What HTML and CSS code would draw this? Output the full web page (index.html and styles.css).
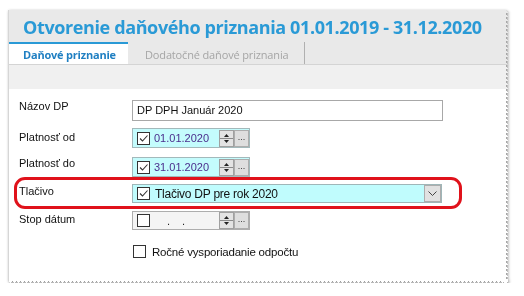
FILE: index.html
```html
<!DOCTYPE html>
<html lang="sk">
<head>
<meta charset="utf-8">
<title>Otvorenie daňového priznania</title>
<link rel="stylesheet" href="styles.css">
</head>
<body>
<div class="frame">
  <div class="panel">
    <div class="title">Otvorenie daňového priznania 01.01.2019 - 31.12.2020</div>
    <div class="tabs">
      <div class="tab active">Daňové priznanie</div>
      <div class="tab">Dodatočné daňové priznania</div>
    </div>
    <div class="strip"></div>
    <div class="content">
      <div class="row r1">
        <div class="label">Názov DP</div>
        <div class="input">DP DPH Január 2020</div>
      </div>
      <div class="row r2">
        <div class="label">Platnosť od</div>
        <div class="date">
          <span class="cb checked"><svg viewBox="0 0 11 11" width="11" height="11"><path d="M2 5.5 L4.5 8 L9.5 2.5" fill="none" stroke="#333" stroke-width="1.1"/></svg></span>
          <span class="dtext">01.01.2020</span>
          <span class="spin"><svg viewBox="0 0 13 15" width="13" height="15"><path d="M4 6 L6.5 3 L9 6 Z" fill="#222"/><line x1="0" y1="7.5" x2="13" y2="7.5" stroke="#8a8a8a"/><path d="M4 9 L6.5 12 L9 9 Z" fill="#222"/></svg></span>
          <span class="dots">...</span>
        </div>
      </div>
      <div class="row r3">
        <div class="label">Platnosť do</div>
        <div class="date">
          <span class="cb checked"><svg viewBox="0 0 11 11" width="11" height="11"><path d="M2 5.5 L4.5 8 L9.5 2.5" fill="none" stroke="#333" stroke-width="1.1"/></svg></span>
          <span class="dtext">31.01.2020</span>
          <span class="spin"><svg viewBox="0 0 13 15" width="13" height="15"><path d="M4 6 L6.5 3 L9 6 Z" fill="#222"/><line x1="0" y1="7.5" x2="13" y2="7.5" stroke="#8a8a8a"/><path d="M4 9 L6.5 12 L9 9 Z" fill="#222"/></svg></span>
          <span class="dots">...</span>
        </div>
      </div>
      <div class="row r4 highlight">
        <div class="label">Tlačivo</div>
        <div class="combo">
          <span class="cb checked"><svg viewBox="0 0 11 11" width="11" height="11"><path d="M2 5.5 L4.5 8 L9.5 2.5" fill="none" stroke="#333" stroke-width="1.1"/></svg></span>
          <span class="ctext">Tlačivo DP pre rok 2020</span>
          <span class="drop"><svg viewBox="0 0 9 5" width="9" height="5"><path d="M0.5 0.5 L4.5 4.5 L8.5 0.5" fill="none" stroke="#444" stroke-width="1"/></svg></span>
        </div>
      </div>
      <div class="row r5">
        <div class="label">Stop dátum</div>
        <div class="date empty">
          <span class="cb"></span>
          <span class="dtext blank"><span>.</span><span>.</span></span>
          <span class="spin"><svg viewBox="0 0 13 15" width="13" height="15"><path d="M4 6 L6.5 3 L9 6 Z" fill="#222"/><line x1="0" y1="7.5" x2="13" y2="7.5" stroke="#8a8a8a"/><path d="M4 9 L6.5 12 L9 9 Z" fill="#222"/></svg></span>
          <span class="dots">...</span>
        </div>
      </div>
      <div class="row r6">
        <div class="label"></div>
        <div class="check">
          <span class="cb big"></span>
          <span class="ctext2">Ročné vysporiadanie odpočtu</span>
        </div>
      </div>
    </div>
  </div>
</div>
</body>
</html>
```

FILE: styles.css
```css
*, *::before, *::after { box-sizing: border-box; }
html, body { margin: 0; padding: 0; background: #fff; }
body { font-family: "Liberation Sans", Arial, sans-serif; color: #111; }

.frame {
  margin: 10px 0 0 8px;
  width: 500px;
  height: 273px;
  filter: drop-shadow(1px 1px 1.5px rgba(0,0,0,.45));
}
.panel {
  width: 100%;
  height: 100%;
  background: #fff;
  display: flex;
  flex-direction: column;
  border-left: 1px solid #d6d6d6;
  -webkit-mask:
    linear-gradient(#000,#000) top left / calc(100% - 4px) calc(100% - 4px) no-repeat,
    conic-gradient(from -135deg at right, #000 90deg, transparent 0) right top / 4px 4px repeat-y,
    conic-gradient(from -45deg at bottom, #000 90deg, transparent 0) left bottom / 4px 4px repeat-x;
  mask:
    linear-gradient(#000,#000) top left / calc(100% - 4px) calc(100% - 4px) no-repeat,
    conic-gradient(from -135deg at right, #000 90deg, transparent 0) right top / 4px 4px repeat-y,
    conic-gradient(from -45deg at bottom, #000 90deg, transparent 0) left bottom / 4px 4px repeat-x;
}

.title {
  height: 32px;
  background: #e9e9e9;
  padding: 4px 0 0 14px;
  font-family: "Open Sans", "Noto Sans", sans-serif;
  font-weight: 700;
  font-size: 18px;
  line-height: 26px;
  color: #2a9ad6;
  letter-spacing: -0.38px;
  white-space: nowrap;
}
.tabs {
  height: 23px;
  background: #e9e9e9;
  display: flex;
  font-family: "Open Sans", "Noto Sans", sans-serif;
  font-size: 11px;
  border-bottom: 1px solid #d4d4d4;
}
.tab {
  height: 22px;
  line-height: 21px;
  white-space: nowrap;
}
.tab.active {
  width: 119px;
  background: #fff;
  border-top: 2px solid #2a9ad6;
  color: #1f7fc2;
  font-weight: 700;
  padding-left: 14px;
  letter-spacing: -0.2px;
}
.tab:not(.active) {
  width: 177px;
  color: #a5a5a5;
  padding: 2px 0 0 17px;
  border-right: 1px solid #b0b0b0;
  letter-spacing: -0.15px;
}
.strip {
  height: 24px;
  background: #f0f0f0;
}

.content {
  flex: 1;
  padding: 11px 0 0 10px;
  font-size: 11px;
}
.row {
  display: grid;
  grid-template-columns: 113px 311px;
  align-items: start;
}
.r1 { height: 21px; margin-bottom: 7px; }
.r2 { height: 20px; margin-bottom: 9px; }
.r3 { height: 20px; margin-bottom: 7px; }
.r4 { height: 19px; margin-bottom: 8px; }
.r5 { height: 19px; margin-bottom: 15px; }
.r6 { height: 14px; }

.label {
  line-height: 13px;
  white-space: nowrap;
}
.r2 .label { margin-top: 3px; }
.r3 .label { margin-top: 0; }
.r4 .label { margin-top: 1px; }
.r5 .label { margin-top: 2px; }

.input {
  height: 21px;
  border: 1px solid #a8a8a8;
  padding-left: 4px;
  line-height: 19px;
  font-size: 11px;
}

.date {
  width: 118px;
  height: 20px;
  border: 1px solid #a3b9bb;
  background: #c4fcfd;
  display: flex;
  align-items: center;
  padding-left: 4px;
}
.date.empty { height: 19px; background: #f4f4f4; border-color: #adadad; }
.cb {
  width: 13px;
  height: 13px;
  border: 1px solid #333;
  background: #fff;
  display: inline-flex;
  align-items: center;
  justify-content: center;
  flex: none;
}
.dtext {
  margin-left: 4px;
  width: 65px;
  color: #4a2d8c;
  font-size: 11px;
}
.dtext.blank { display: flex; padding-left: 13px; gap: 12px; color: #222; line-height: 8px; }
.spin {
  width: 15px;
  height: 17px;
  border: 1px solid #a0a0a0;
  background: #e3e3e3;
  display: inline-flex;
  align-items: center;
  justify-content: center;
  flex: none;
}
.spin svg { display: block; }
.dots {
  width: 15px;
  height: 17px;
  border: 1px solid #adadad;
  background: #dedede;
  font-size: 9px;
  line-height: 13px;
  text-align: center;
  color: #333;
  flex: none;
}

.highlight { position: relative; }
.highlight::after {
  content: "";
  position: absolute;
  left: -5px;
  top: -7px;
  width: 448px;
  height: 32px;
  border: 3px solid #e0121b;
  border-radius: 11px;
  pointer-events: none;
}
.combo {
  width: 310px;
  height: 19px;
  border: 1px solid #9fb6b8;
  background: #c0fcfd;
  display: flex;
  align-items: center;
  padding-left: 4px;
}
.ctext {
  margin-left: 5px;
  font-size: 12px;
  flex: 1;
  letter-spacing: -0.25px;
}
.drop {
  width: 17px;
  height: 17px;
  border: 1px solid #adadad;
  background: #e1e1e1;
  display: inline-flex;
  align-items: center;
  justify-content: center;
  flex: none;
}
.check {
  display: flex;
  align-items: center;
  margin-left: 1px;
}
.ctext2 { margin-left: 6px; font-size: 11.5px; letter-spacing: -0.2px; }
```
